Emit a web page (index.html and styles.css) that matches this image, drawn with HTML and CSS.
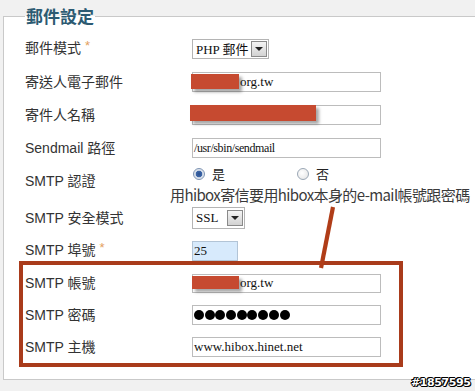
FILE: index.html
```html
<!DOCTYPE html>
<html lang="zh-Hant">
<head>
<meta charset="utf-8">
<link rel="stylesheet" href="styles.css">
</head>
<body>
<fieldset class="mail">
  <legend>郵件設定</legend>
  <div class="row">
    <label class="lbl">郵件模式 <span class="req">*</span></label>
    <div class="select w-mode"><span class="val">PHP 郵件</span><span class="btn"><i></i></span></div>
  </div>
  <div class="row">
    <label class="lbl">寄送人電子郵件</label>
    <div class="input"><span class="mask m1"></span><span class="txt pad-org">org.tw</span></div>
  </div>
  <div class="row">
    <label class="lbl">寄件人名稱</label>
    <div class="input"><span class="mask m2"></span></div>
  </div>
  <div class="row">
    <label class="lbl">Sendmail 路徑</label>
    <div class="input"><span class="txt small">/usr/sbin/sendmail</span></div>
  </div>
  <div class="row r-auth">
    <label class="lbl">SMTP 認證</label>
    <div class="radios">
      <span class="opt yes"><span class="radio on"></span>是</span>
      <span class="opt"><span class="radio"></span>否</span>
    </div>
  </div>
  <div class="row">
    <label class="lbl">SMTP 安全模式</label>
    <div class="select w-ssl tall"><span class="val">SSL</span><span class="btn"><i></i></span></div>
  </div>
  <div class="row">
    <label class="lbl">SMTP 埠號 <span class="req">*</span></label>
    <div class="input port"><span class="txt">25</span></div>
  </div>
  <div class="row r-s">
    <label class="lbl">SMTP 帳號</label>
    <div class="input short"><span class="mask m3"></span><span class="txt pad-org">org.tw</span></div>
  </div>
  <div class="row r-s">
    <label class="lbl">SMTP 密碼</label>
    <div class="input pw"><span class="dots"><i></i><i></i><i></i><i></i><i></i><i></i><i></i><i></i><i></i></span></div>
  </div>
  <div class="row r-s">
    <label class="lbl">SMTP 主機</label>
    <div class="input"><span class="txt">www.hibox.hinet.net</span></div>
  </div>
</fieldset>

<div class="note">用hibox寄信要用hibox本身的e-mail帳號跟密碼</div>
<div class="hl"></div>
<svg class="pointer" width="20" height="66" viewBox="0 0 20 66"><line x1="15" y1="2" x2="3" y2="63" stroke="#b03d18" stroke-width="4.2"/></svg>
<div class="wm">#1857595</div>
</body>
</html>
```
FILE: styles.css
```css
html, body {
  margin: 0;
  padding: 0;
}
body {
  position: relative;
  width: 475px;
  height: 391px;
  overflow: hidden;
  background: #f1f1f1;
  font-family: "Liberation Sans", "Noto Sans CJK TC", sans-serif;
  color: #333;
}
.mail {
  margin: 5px 0 0 3px;
  padding: 5px 0 16px 21px;
  border: 1px solid #c9c9c9;
  border-right: none;
  background: #fff;
  min-width: 0;
}
.mail legend {
  padding: 0 1px;
  margin-left: 0;
  font-family: "Noto Sans CJK TC", sans-serif;
  font-weight: 700;
  font-size: 17px;
  line-height: 22px;
  color: #2c5a72;
}
.row {
  display: flex;
  align-items: center;
  height: 33px;
}
.row.r-s { height: 32px; }
.row.r-auth { margin-bottom: 4px; }
.lbl {
  width: 167px;
  flex: none;
  font-size: 14px;
  line-height: 18px;
  color: #333;
}
.req {
  color: #e3a05e;
  font-size: 13px;
  position: relative;
  top: -3px;
}
.input {
  position: relative;
  box-sizing: border-box;
  width: 189px;
  height: 20px;
  border: 1px solid #bcbcbc;
  background: #fff;
  font-family: "Liberation Serif", serif;
  font-size: 13px;
  line-height: 18px;
  color: #111;
  display: flex;
  align-items: center;
}
.input.short { height: 19px; }
.txt { padding-left: 1px; }
.txt.small { font-size: 12px; letter-spacing: -0.4px; }
.pad-org { padding-left: 47px; }
.input.port {
  width: 46px;
  background: #d7eafc;
  border-color: #b2c4d6;
}
.mask {
  position: absolute;
  background: #c64a30;
  box-shadow: 3px 3px 3px rgba(0,0,0,0.35);
}
.m1 { left: -2px; top: 1px; width: 48px; height: 15px; }
.m2 { left: -3px; top: -1px; width: 126px; height: 16px; }
.m3 { left: -1px; top: 1px; width: 47px; height: 13px; }
.dots {
  display: flex;
  gap: 0.7px;
  padding-left: 1px;
}
.dots i {
  width: 10px;
  height: 10px;
  border-radius: 50%;
  background: #000;
}
.select {
  box-sizing: border-box;
  height: 20px;
  border: 1px solid #b4b4b4;
  background: #fff;
  display: flex;
  align-items: center;
  justify-content: space-between;
  font-family: "Liberation Serif", "Noto Sans CJK TC", serif;
  font-size: 13px;
  color: #111;
  padding: 0 1px 0 3px;
}
.select.w-mode { width: 77px; }
.select.w-ssl { width: 53px; height: 22px; }
.select .btn {
  box-sizing: border-box;
  width: 16px;
  height: 16px;
  border: 1px solid #8a8a8a;
  background: linear-gradient(#f4f4f4, #d2d2d2);
  display: flex;
  align-items: center;
  justify-content: center;
}
.select .btn i {
  width: 0;
  height: 0;
  border-left: 4px solid transparent;
  border-right: 4px solid transparent;
  border-top: 4px solid #222;
  margin-top: 1px;
}
.radios {
  display: flex;
  align-self: flex-start;
  margin-top: 2px;
  font-family: "Noto Sans CJK TC", sans-serif;
  font-size: 13px;
  line-height: 15px;
  color: #222;
}
.opt {
  display: flex;
  align-items: center;
  gap: 7px;
}
.opt.yes { width: 104px; }
.radio {
  box-sizing: border-box;
  width: 12px;
  height: 12px;
  margin-left: 1px;
  border-radius: 50%;
  border: 1px solid #9aa7b5;
  background: radial-gradient(circle at 40% 40%, #fff, #e2e2e2);
}
.radio.on {
  border-color: #7d93b2;
  background: radial-gradient(circle, #2a4f8e 0, #3d66a8 3px, #cfd9e6 3.6px, #f2f4f7 6px);
}
.note {
  position: absolute;
  left: 170px;
  top: 186px;
  font-family: "Noto Sans CJK TC", sans-serif;
  font-size: 15px;
  line-height: 17px;
  letter-spacing: -0.6px;
  color: #3a3a3a;
  white-space: nowrap;
}
.hl {
  position: absolute;
  left: 19px;
  top: 261px;
  width: 376px;
  height: 98px;
  border: 4px solid #a93b1b;
}
.pointer {
  position: absolute;
  left: 318px;
  top: 205px;
}
.wm {
  position: absolute;
  left: 411px;
  top: 376px;
  font-family: "DejaVu Sans", sans-serif;
  font-weight: 700;
  font-size: 11px;
  line-height: 14px;
  letter-spacing: -0.4px;
  color: #fff;
  text-shadow: -1px 0 #000, 1px 0 #000, 0 -1px #000, 0 1px #000, 1px 1px #000, -1px -1px #000;
}
```
